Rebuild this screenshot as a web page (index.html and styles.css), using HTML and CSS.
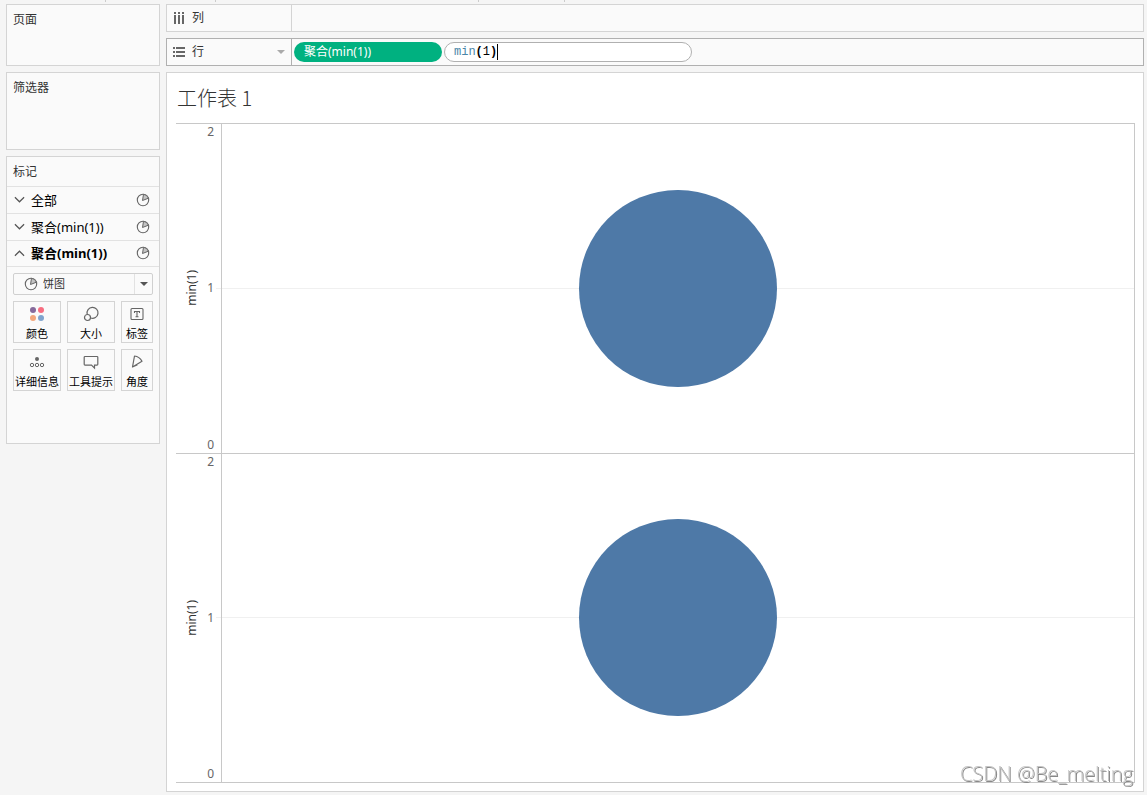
FILE: index.html
```html
<!DOCTYPE html>
<html lang="zh-CN">
<head>
<meta charset="utf-8">
<title>工作表 1</title>
<link rel="stylesheet" href="styles.css">
</head>
<body>
<svg class="defs" aria-hidden="true">
  <symbol id="pie" viewBox="0 0 14 14">
    <circle cx="7" cy="7" r="5.7" fill="none" stroke="#666" stroke-width="1.1"/>
    <path d="M6.500 7.500 7.500 1.300A5.700 5.700 0 0 1 12.400 5.200Z" fill="#c4c4c4" stroke="#666" stroke-width="1"/>
  </symbol>
  <symbol id="chevron" viewBox="0 0 12 12">
    <path d="M1 3.500 6 8.500l5-5" fill="none" stroke="#555" stroke-width="1.3"/>
  </symbol>
</svg>
<div class="toolbar-edge" aria-hidden="true"><i class="tick tick-a"></i><i class="tick tick-b"></i><i class="tick tick-c"></i><i class="tick tick-d"></i></div>
<div class="workspace">
  <aside class="side">
    <section class="card card-pages"><h2 class="card-title">页面</h2></section>
    <section class="card card-filters"><h2 class="card-title">筛选器</h2></section>
    <section class="card card-marks">
      <h2 class="card-title">标记</h2>
      <button class="layer"><svg class="chevron"><use href="#chevron"/></svg><span class="layer-name">全部</span><svg class="pie"><use href="#pie"/></svg></button>
      <button class="layer"><svg class="chevron"><use href="#chevron"/></svg><span class="layer-name">聚合(min(1))</span><svg class="pie"><use href="#pie"/></svg></button>
      <button class="layer layer-active"><svg class="chevron"><use href="#chevron"/></svg><span class="layer-name">聚合(min(1))</span><svg class="pie"><use href="#pie"/></svg></button>
      <div class="mark-body">
        <div class="mark-type">
          <svg class="pie"><use href="#pie"/></svg>
          <select class="mark-select" aria-label="标记类型"><option>饼图</option></select>
          <span class="mark-arrow"><svg class="arrow" viewBox="0 0 8 4"><path d="M0 0h8L4 4z" fill="#555"/></svg></span>
        </div>
        <div class="mark-grid">
          <button class="mark"><svg class="icon" viewBox="0 0 16 16"><circle cx="4" cy="4" r="3" fill="#866a9b"/><circle cx="12" cy="4" r="3" fill="#f86d80"/><circle cx="4" cy="12" r="3" fill="#f3a77c"/><circle cx="12" cy="12" r="3" fill="#80a4ce"/></svg>颜色</button>
          <button class="mark"><svg class="icon" viewBox="0 0 16 16" fill="none" stroke="#666" stroke-width="1.2"><path d="M4.200 8.200A5.500 5.500 0 1 1 7.700 12"/><circle cx="4.500" cy="11.500" r="3"/></svg>大小</button>
          <button class="mark"><svg class="icon" viewBox="0 0 16 16" fill="none" stroke="#666" stroke-width="1.1"><rect x="2" y="2.5" width="12" height="11" rx="1"/><path d="M5.5 7V5.5h5V7M8 5.5v5.2M6.5 10.7h3"/></svg>标签</button>
          <button class="mark"><svg class="icon" viewBox="0 0 16 16" fill="none" stroke="#666"><circle cx="8" cy="5" r="2" fill="#666" stroke="none"/><circle cx="3" cy="11" r="1.7"/><circle cx="8" cy="11" r="1.7"/><circle cx="13" cy="11" r="1.7"/></svg>详细信息</button>
          <button class="mark"><svg class="icon" viewBox="0 0 16 16" fill="none" stroke="#666" stroke-width="1.2"><path d="M2 2.5h12a.8.8 0 0 1 .8.8v7a.8.8 0 0 1-.8.8h-2.500v3L8.500 11.100H2a.8.8 0 0 1-.8-.8v-7a.8.8 0 0 1 .8-.8z"/></svg>工具提示</button>
          <button class="mark"><svg class="icon" viewBox="0 0 16 16" fill="none" stroke="#666" stroke-width="1.2" stroke-linejoin="round"><path d="M5.500 2 3.500 13 13 7.300C11.500 4.500 8.500 2.300 5.500 2zM3.500 13 8.500 10.800"/></svg>角度</button>
        </div>
      </div>
    </section>
  </aside>
  <main class="main">
    <section class="shelf">
      <div class="shelf-label"><svg class="shelf-icon" viewBox="0 0 12 12" fill="#666"><path d="M1 0h2v2H1zM5 0h2v2H5zM9 0h2v2H9zM1 3h2v9H1zM5 3h2v9H5zM9 3h2v9H9z"/></svg>列</div>
      <div class="shelf-fields"></div>
    </section>
    <section class="shelf shelf-active">
      <div class="shelf-label"><svg class="shelf-icon" viewBox="0 0 12 12" fill="#666"><path d="M0 1h2v2H0zM0 5h2v2H0zM0 9h2v2H0zM3 1h9v2H3zM3 5h9v2H3zM3 9h9v2H3z"/></svg>行
        <svg class="arrow shelf-arrow" viewBox="0 0 8 4"><path d="M0 0h8L4 4z" fill="#aaa"/></svg></div>
      <div class="shelf-fields">
        <button class="pill">聚合(min(1))</button>
        <div class="editor">
          <input class="editor-input" type="text" value="min(1)" aria-label="公式">
          <div class="editor-code" aria-hidden="true"><span class="fn">min</span><b>(</b>1<b>)</b><i class="caret"></i></div>
        </div>
      </div>
    </section>
    <section class="view">
      <h1 class="view-title">工作表 1</h1>
      <div class="chart">
        <div class="pane">
          <div class="axis"><span class="axis-name">min(1)</span><div class="axis-ticks"><span>2</span><span>1</span><span>0</span></div></div>
          <div class="plot"><div class="disc"></div></div>
        </div>
        <div class="pane">
          <div class="axis"><span class="axis-name">min(1)</span><div class="axis-ticks"><span>2</span><span>1</span><span>0</span></div></div>
          <div class="plot"><div class="disc"></div></div>
        </div>
      </div>
    </section>
  </main>
</div>
<div class="watermark">CSDN @Be_melting</div>
</body>
</html>
```

FILE: styles.css
```css
* { box-sizing: border-box; }

body {
  margin: 0;
  min-height: 100vh;
  display: flex;
  flex-direction: column;
  background: #f5f5f5;
  color: #333;
  font: 12px/16px "Noto Sans", "Noto Sans CJK SC", sans-serif;
}

button, input, select { font: inherit; color: inherit; }
button { cursor: pointer; }
h1, h2 { margin: 0; font-weight: 400; }
.defs { position: absolute; width: 0; height: 0; }

.toolbar-edge { height: 4px; display: flex; }
.tick { width: 1px; height: 2px; background: #ccc; }
.tick-a { margin-left: 105px; }
.tick-b { margin-left: 109px; }
.tick-c { margin-left: 262px; }
.tick-d { margin-left: 85px; }

.workspace {
  flex: 1;
  display: grid;
  grid-template-columns: 154px 1fr;
  gap: 6px;
  padding: 0 3px 3px 6px;
}

.side, .main { display: flex; flex-direction: column; gap: 6px; min-width: 0; }

.card { background: #fafafa; border: 1px solid #d4d4d4; }
.card-title { padding: 6px; font-size: 12px; line-height: 17px; }
.card-pages { min-height: 62px; }
.card-filters { min-height: 78px; }
.card-marks { min-height: 288px; }

.layer {
  display: flex;
  align-items: center;
  gap: 6px;
  width: 100%;
  height: 27px;
  padding: 0 9px 1px 7px;
  border: 0;
  border-top: 1px solid #e2e2e2;
  background: none;
  color: #000;
  font-size: 13px;
  text-align: left;
}
.layer-name { flex: 1; white-space: nowrap; }
.layer-active { height: 26px; font-weight: 700; }
.layer-active .chevron { transform: rotate(180deg); }
.chevron { width: 11px; height: 11px; }
.pie { width: 14px; height: 14px; }

.mark-body {
  border-top: 1px solid #e2e2e2;
  padding: 6px;
  display: grid;
  gap: 6px;
}
.mark-type {
  display: flex;
  align-items: center;
  height: 22px;
  padding-left: 10px;
  border: 1px solid #d0d0d0;
  border-radius: 2px;
}
.mark-select {
  flex: 1;
  min-width: 0;
  padding: 0 5px;
  border: 0;
  appearance: none;
  background: none;
  font-size: 11px;
}
.mark-arrow {
  display: flex;
  align-items: center;
  justify-content: center;
  width: 18px;
  height: 100%;
  border-left: 1px solid #e2e2e2;
}
.arrow { width: 8px; height: 4px; }

.mark-grid { display: grid; grid-template-columns: 48px 48px 32px; gap: 6px; }
.mark {
  display: flex;
  flex-direction: column;
  align-items: center;
  justify-content: space-between;
  height: 42px;
  padding: 4px 0 0;
  border: 1px solid #d4d4d4;
  background: #fafafa;
  color: #000;
  font-size: 11px;
  white-space: nowrap;
}
.icon { width: 16px; height: 16px; }

.shelf {
  display: flex;
  height: 28px;
  background: #fafafa;
  border: 1px solid #d4d4d4;
}
.shelf-label {
  display: flex;
  align-items: center;
  gap: 7px;
  width: 125px;
  padding: 0 6px;
  border-right: 1px solid #d4d4d4;
}
.shelf-icon { width: 12px; height: 12px; }
.shelf-arrow { margin-left: auto; }
.shelf-active, .shelf-active .shelf-label { border-color: #b0b0b0; }
.shelf-fields { flex: 1; display: flex; align-items: center; gap: 2px; padding: 0 2px; }

.pill {
  width: 148px;
  height: 20px;
  padding: 0 10px;
  border: 0;
  border-radius: 10px;
  background: #00b180;
  color: #fff;
  text-align: left;
}
.editor { position: relative; width: 248px; height: 20px; font-family: "Liberation Mono", monospace; }
.editor-input {
  width: 100%;
  height: 100%;
  padding: 0 10px;
  border: 1px solid #b0b0b0;
  border-radius: 10px;
  background: #fff;
  color: transparent;
  caret-color: #000;
}
.editor-code {
  position: absolute;
  inset: 0;
  display: flex;
  align-items: center;
  padding: 0 10px;
  color: #000;
  pointer-events: none;
}
.fn { color: #4a86a8; }
.caret { width: 1px; height: 16px; background: #000; }

.view {
  flex: 1;
  display: flex;
  flex-direction: column;
  padding: 0 8px 8px 9px;
  background: #fff;
  border: 1px solid #d4d4d4;
}
.view-title {
  padding-left: 1px;
  font: 300 20px/50px "Noto Sans CJK SC", sans-serif;
}
.chart {
  flex: 1;
  display: flex;
  flex-direction: column;
  border: solid #c8c8c8;
  border-width: 0 1px 1px 0;
}
.pane { flex: 1; display: flex; border-top: 1px solid #c8c8c8; }
.axis {
  display: flex;
  justify-content: space-between;
  align-items: center;
  width: 45px;
  padding: 0 7px 0 8px;
  background: linear-gradient(#f0f0f0, #f0f0f0) right center / 5px 1px no-repeat;
}
.axis-name { writing-mode: vertical-rl; transform: rotate(180deg); }
.axis-ticks {
  display: flex;
  flex-direction: column;
  justify-content: space-between;
  align-self: stretch;
  color: #666;
}
.plot {
  flex: 1;
  display: flex;
  align-items: center;
  justify-content: center;
  border-left: 1px solid #c8c8c8;
  background: linear-gradient(#f0f0f0, #f0f0f0) center / 100% 1px no-repeat;
}
.disc { height: 60%; aspect-ratio: 1; border-radius: 50%; background: #4e79a7; }

.watermark {
  position: fixed;
  right: 14px;
  bottom: 7px;
  color: #c4c4c4;
  font: 300 20px/28px "Open Sans", sans-serif;
  text-shadow: 1px 1px 0 #888;
}
```
